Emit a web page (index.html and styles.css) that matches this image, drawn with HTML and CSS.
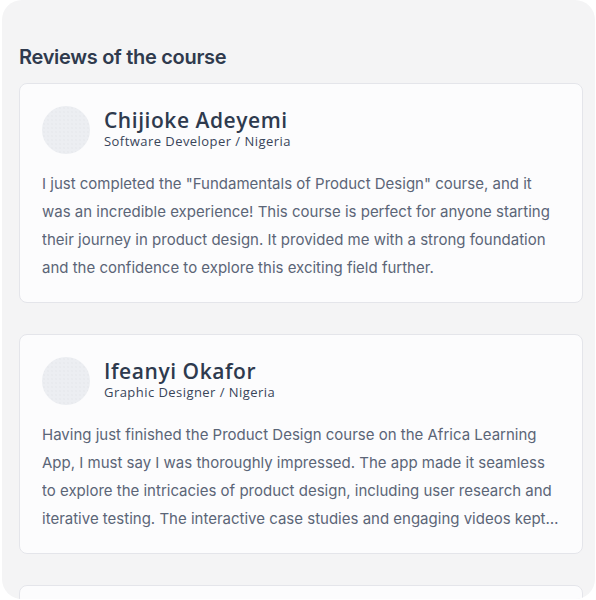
FILE: index.html
```html
<!DOCTYPE html>
<html lang="en">
<head>
<meta charset="utf-8">
<title>Reviews of the course</title>
<link rel="stylesheet" href="styles.css">
</head>
<body>
<section class="panel">
  <h2 class="panel-title">Reviews of the course</h2>
  <div class="review-list">
    <article class="review">
      <div class="review-head">
        <div class="avatar"></div>
        <div class="who">
          <div class="name">Chijioke Adeyemi</div>
          <div class="role">Software Developer / Nigeria</div>
        </div>
      </div>
      <p class="review-text">I just completed the "Fundamentals of Product Design" course, and it was an incredible experience! This course is perfect for anyone starting their journey in product design. It provided me with a strong foundation and the confidence to explore this exciting field further.</p>
    </article>
    <article class="review">
      <div class="review-head">
        <div class="avatar"></div>
        <div class="who">
          <div class="name">Ifeanyi Okafor</div>
          <div class="role">Graphic Designer / Nigeria</div>
        </div>
      </div>
      <p class="review-text">Having just finished the Product Design course on the Africa Learning App, I must say I was thoroughly impressed. The app made it seamless to explore the intricacies of product design, including user research and iterative testing. The interactive case studies and engaging videos kept me motivated throughout the whole course.</p>
    </article>
    <article class="review">
      <div class="review-head">
        <div class="avatar"></div>
        <div class="who">
          <div class="name">Amara Nwosu</div>
          <div class="role">UX Researcher / Nigeria</div>
        </div>
      </div>
      <p class="review-text">A wonderful course.</p>
    </article>
  </div>
</section>
</body>
</html>
```

FILE: styles.css
```css
html, body {
  margin: 0;
  padding: 0;
  background: #ffffff;
}

.panel {
  box-sizing: border-box;
  margin: 0 1px 0 2px;
  height: 599px;
  background: #f4f4f5;
  border-radius: 20px;
  overflow: hidden;
  padding: 43px 12px 0 17px;
}

.panel-title {
  margin: 0 0 12px;
  font-family: "Inter", sans-serif;
  font-weight: 600;
  font-size: 20px;
  line-height: 28px;
  letter-spacing: -0.3px;
  color: #2f3a4d;
}

.review-list {
  display: flex;
  flex-direction: column;
  gap: 31px;
}

.review {
  flex: none;
  box-sizing: border-box;
  height: 220px;
  background: #fcfcfd;
  border: 1px solid #e4e5ea;
  border-radius: 8px;
  padding: 22px 22px 20px;
  display: flex;
  flex-direction: column;
  gap: 16px;
}

.review-head {
  display: flex;
  align-items: center;
  gap: 14px;
}

.avatar {
  flex: none;
  width: 48px;
  height: 48px;
  border-radius: 50%;
  background-color: #eceef2;
  background-image: radial-gradient(circle, #e3e5ea 0.6px, transparent 0.8px);
  background-size: 4px 4px;
}

.who {
  display: flex;
  flex-direction: column;
  padding-bottom: 4px;
}

.name {
  font-family: "Open Sans", sans-serif;
  font-weight: 600;
  font-size: 21px;
  line-height: 25px;
  letter-spacing: 0.55px;
  color: #2e3a4e;
}

.role {
  font-family: "Open Sans", sans-serif;
  font-weight: 400;
  font-size: 13px;
  line-height: 16px;
  letter-spacing: 0.45px;
  color: #39455a;
}

.review-text {
  margin: 0;
  font-family: "Inter", sans-serif;
  font-size: 15px;
  line-height: 28px;
  color: #5b6577;
  display: -webkit-box;
  -webkit-line-clamp: 4;
  -webkit-box-orient: vertical;
  overflow: hidden;
}
```
